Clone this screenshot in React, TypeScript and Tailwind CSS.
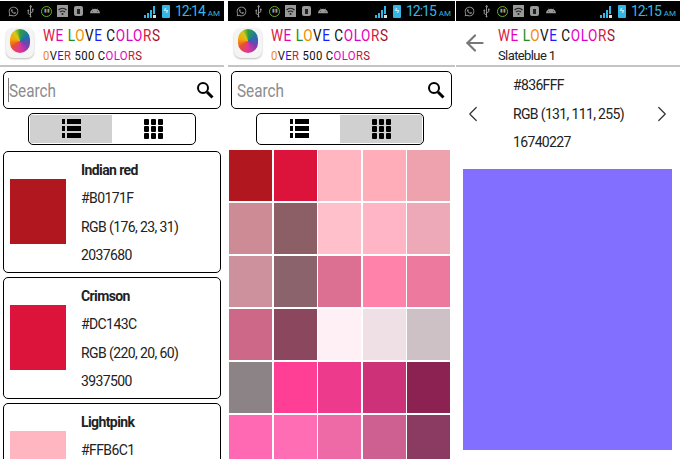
import { ArrowLeft, ChevronLeft, ChevronRight, Usb } from "lucide-react";
import { FaWhatsapp, FaAndroid } from "react-icons/fa";
import type { ReactNode } from "react";

type Letter = [string, string];

const RED = "#dc143c";
const PINK = "#e600b8";
const GREEN = "#228b22";
const ORANGE = "#f08c00";
const BLUE = "#1a1aff";
const BLACK = "#111111";
const PURPLE = "#d400d4";
const DARK = "#a0102a";

const weLove: Letter[] = [
  ["W", RED], ["E", PINK], [" ", BLACK], ["L", GREEN], ["O", ORANGE], ["V", BLACK], ["E", BLUE],
  [" ", BLACK], ["C", BLACK], ["O", PINK], ["L", PURPLE], ["O", PINK], ["R", RED], ["S", DARK],
];

const over500: Letter[] = [
  ["0", ORANGE], ["V", BLACK], ["E", BLUE], ["R", RED], [" ", BLACK], ["5", BLACK], ["0", BLACK], ["0", BLACK],
  [" ", BLACK], ["C", BLACK], ["O", PINK], ["L", PURPLE], ["O", PINK], ["R", RED], ["S", DARK],
];

const grid = [
  "#b0171f", "#dc143c", "#ffb6c1", "#ffaeb9", "#eea2ad",
  "#cd8c95", "#8b5f65", "#ffc0cb", "#ffb5c5", "#eea9b8",
  "#cd919e", "#8b636c", "#db7093", "#ff82ab", "#ee799f",
  "#cd6889", "#8b475d", "#fff0f5", "#eee0e5", "#cdc1c5",
  "#8b8386", "#ff3e96", "#ee3a8c", "#cd3278", "#8b2252",
  "#ff69b4", "#ff6eb4", "#ee6aa7", "#cd6090", "#8b3a62",
];

const cards = [
  { name: "Indian red", hex: "#B0171F", rgb: "RGB (176, 23, 31)", num: "2037680", color: "#b0171f" },
  { name: "Crimson", hex: "#DC143C", rgb: "RGB (220, 20, 60)", num: "3937500", color: "#dc143c" },
  { name: "Lightpink", hex: "#FFB6C1", rgb: "RGB (255, 182, 193)", num: "12695295", color: "#ffb6c1" },
];

function Colored({ letters, className }: { letters: Letter[]; className: string }) {
  return (
    <div className={className}>
      {letters.map(([ch, color], i) => (
        <span key={i} style={{ color }}>
          {ch}
        </span>
      ))}
    </div>
  );
}

function StatusBar({ time }: { time: string }) {
  return (
    <div className="mt-px flex h-[20px] shrink-0 items-center bg-black pl-[8px] pr-[4px]">
      <FaWhatsapp className="h-[11px] w-[11px] text-[#999]" />
      <Usb className="ml-[6px] h-[11px] w-[11px] rotate-[-45deg] text-[#999]" />
      <div className="ml-[5px] flex h-[11px] w-[11px] items-center justify-center rounded-full border border-[#6fae2c] text-[5px] text-[#999]">
        ▮▮
      </div>
      <svg width="11" height="12" viewBox="0 0 11 12" className="ml-[5px]">
        <rect width="11" height="12" fill="#999" />
        <path d="M1.5 5 A6 6 0 0 1 9.5 5 M3 7 A4 4 0 0 1 8 7" fill="none" stroke="#222" strokeWidth="1.2" />
        <circle cx="5.5" cy="9" r="1" fill="#222" />
      </svg>
      <div className="ml-[6px] flex h-[10px] w-[9px] items-center justify-center rounded-[2px] bg-[#999]">
        <div className="h-[5px] w-[3px] bg-[#222]" />
      </div>
      <FaAndroid className="ml-[7px] h-[10px] w-[10px] text-[#999]" />
      <div className="ml-auto flex items-center">
        <svg width="14" height="13" viewBox="0 0 14 13" className="mr-[5px]">
          <rect x="1" y="10" width="2" height="3" fill="#33b5e5" />
          <rect x="4" y="8" width="2" height="5" fill="#33b5e5" />
          <rect x="7" y="5" width="2" height="8" fill="#33b5e5" />
          <rect x="10" y="1" width="2" height="8" fill="#33b5e5" />
          <rect x="10" y="10" width="3" height="3" fill="#dddddd" />
        </svg>
        <div className="flex h-[13px] w-[8px] items-center justify-center rounded-[1px] bg-[#33b5e5] text-[8px] leading-none text-white">
          ϟ
        </div>
        <span className="ml-[5px] text-[14px] leading-none tracking-[-1px] text-[#33b5e5]">
          {time}
          <span className="ml-[3px] text-[8px] tracking-normal">AM</span>
        </span>
      </div>
    </div>
  );
}

function Header({ children, sub }: { children: ReactNode; sub: ReactNode }) {
  return (
    <div className="flex h-[46px] shrink-0 items-center border-b-2 border-[#c4c4c4]">
      {children}
      <div className="pt-[5px]">
        <Colored
          letters={weLove}
          className="origin-left scale-x-[0.82] whitespace-pre text-[16.5px] leading-[20px] tracking-[0.7px]"
        />
        {sub}
      </div>
    </div>
  );
}

function Logo() {
  return (
    <div className="ml-[6px] mr-[9px] flex h-[30px] w-[28px] shrink-0 items-start justify-center rounded-[7px] bg-[#f4f4f4] pt-px shadow-[0_1px_2px_#bbbbbb]">
      <div className="h-[24px] w-[20px] rounded-full bg-[conic-gradient(#2f9e44,#1e6fb0_60deg,#7a3fb0_120deg,#e0359a_180deg,#e8502f_235deg,#f5a30a_280deg,#d8c81a_330deg,#2f9e44)]" />
    </div>
  );
}

function BrandHeader() {
  return (
    <Header
      sub={
        <Colored
          letters={over500}
          className="origin-left scale-x-[0.87] whitespace-pre text-[13px] leading-[20px] tracking-[0.4px]"
        />
      }
    >
      <Logo />
    </Header>
  );
}

function SearchBox({ cursor }: { cursor?: boolean }) {
  return (
    <div className="mx-[3px] mt-[4px] flex h-[38px] shrink-0 items-center rounded-[5px] border border-black pl-[4px] pr-[6px]">
      <div className={`h-[24px] w-px ${cursor ? "bg-[#777]" : ""}`} />
      <span className="origin-left scale-x-[0.85] text-[18px] text-[#8c8c8c]">Search</span>
      <svg width="18" height="18" viewBox="0 0 18 18" className="ml-auto">
        <circle cx="7" cy="7" r="5" fill="none" stroke="black" strokeWidth="2" />
        <path d="M11 11 L16.5 16.5" stroke="black" strokeWidth="3" />
      </svg>
    </div>
  );
}

function ListGlyph() {
  return (
    <svg width="19" height="21" viewBox="0 0 19 21">
      {[0, 7, 14].map((y) => (
        <g key={y}>
          <rect x="0" y={y} width="3" height="5" />
          <rect x="5" y={y} width="14" height="5" />
        </g>
      ))}
    </svg>
  );
}

function GridGlyph() {
  return (
    <svg width="19" height="21" viewBox="0 0 19 21">
      {[0, 7, 14].map((y) =>
        [0, 7, 14].map((x) => <rect key={`${x}-${y}`} x={x} y={y} width="5" height="6" rx="1" />),
      )}
    </svg>
  );
}

function Toggle({ active }: { active: "list" | "grid" }) {
  return (
    <div className="ml-[28px] mt-[4px] flex h-[32px] w-[168px] shrink-0 overflow-hidden rounded-[5px] border border-black p-[1px]">
      <div className={`flex flex-1 items-center justify-center ${active === "list" ? "bg-[#d0d0d0]" : ""}`}>
        <ListGlyph />
      </div>
      <div className={`flex flex-1 items-center justify-center ${active === "grid" ? "bg-[#d0d0d0]" : ""}`}>
        <GridGlyph />
      </div>
    </div>
  );
}

function ColorCard({ card }: { card: (typeof cards)[number] }) {
  return (
    <div className="mx-[3px] flex h-[122px] shrink-0 items-center rounded-[5px] border border-black pl-[6px]">
      <div className="mb-[2px] h-[65px] w-[56px] shrink-0" style={{ backgroundColor: card.color }} />
      <div className="ml-[15px] pt-px text-[14px] leading-[28.4px] tracking-[-0.6px] text-[#222]">
        <div className="font-bold">{card.name}</div>
        <div>{card.hex}</div>
        <div>{card.rgb}</div>
        <div>{card.num}</div>
      </div>
    </div>
  );
}

export default function App() {
  return (
    <div className="flex h-[459px] w-[680px] overflow-hidden bg-white font-['Roboto',sans-serif]">
      <div className="flex w-[224px] shrink-0 flex-col overflow-hidden">
        <StatusBar time="12:14" />
        <BrandHeader />
        <SearchBox cursor />
        <Toggle active="list" />
        <div className="mt-[6px] flex shrink-0 flex-col gap-[4px]">
          {cards.map((c) => (
            <ColorCard key={c.name} card={c} />
          ))}
        </div>
      </div>

      <div className="ml-[4px] flex w-[227px] shrink-0 flex-col overflow-hidden">
        <StatusBar time="12:15" />
        <BrandHeader />
        <SearchBox />
        <Toggle active="grid" />
        <div className="ml-[1px] mr-[5px] mt-[5px] grid shrink-0 grid-cols-5 gap-x-[1.5px] gap-y-[2px]">
          {grid.map((c, i) => (
            <div key={i} className="h-[51px]" style={{ backgroundColor: c }} />
          ))}
        </div>
      </div>

      <div className="ml-px flex w-[224px] shrink-0 flex-col">
        <StatusBar time="12:15" />
        <Header sub={<div className="text-[13px] leading-[20px] tracking-[-0.6px] text-[#222]">Slateblue 1</div>}>
          <ArrowLeft className="ml-[6px] mr-[10px] h-[26px] w-[26px] text-[#777]" strokeWidth={2} />
        </Header>
        <div className="mt-[4px] flex shrink-0 items-center pl-[4px] pr-[5px]">
          <ChevronLeft className="h-[26px] w-[26px] text-[#333]" strokeWidth={1.1} />
          <div className="ml-[27px] text-[14px] leading-[28.5px] tracking-[-0.65px] text-[#222]">
            <div>#836FFF</div>
            <div>RGB (131, 111, 255)</div>
            <div>16740227</div>
          </div>
          <ChevronRight className="ml-auto h-[26px] w-[26px] text-[#333]" strokeWidth={1.1} />
        </div>
        <div className="ml-[7px] mt-[12px] h-[281px] w-[209px] shrink-0 bg-[#836fff]" />
      </div>
    </div>
  );
}
